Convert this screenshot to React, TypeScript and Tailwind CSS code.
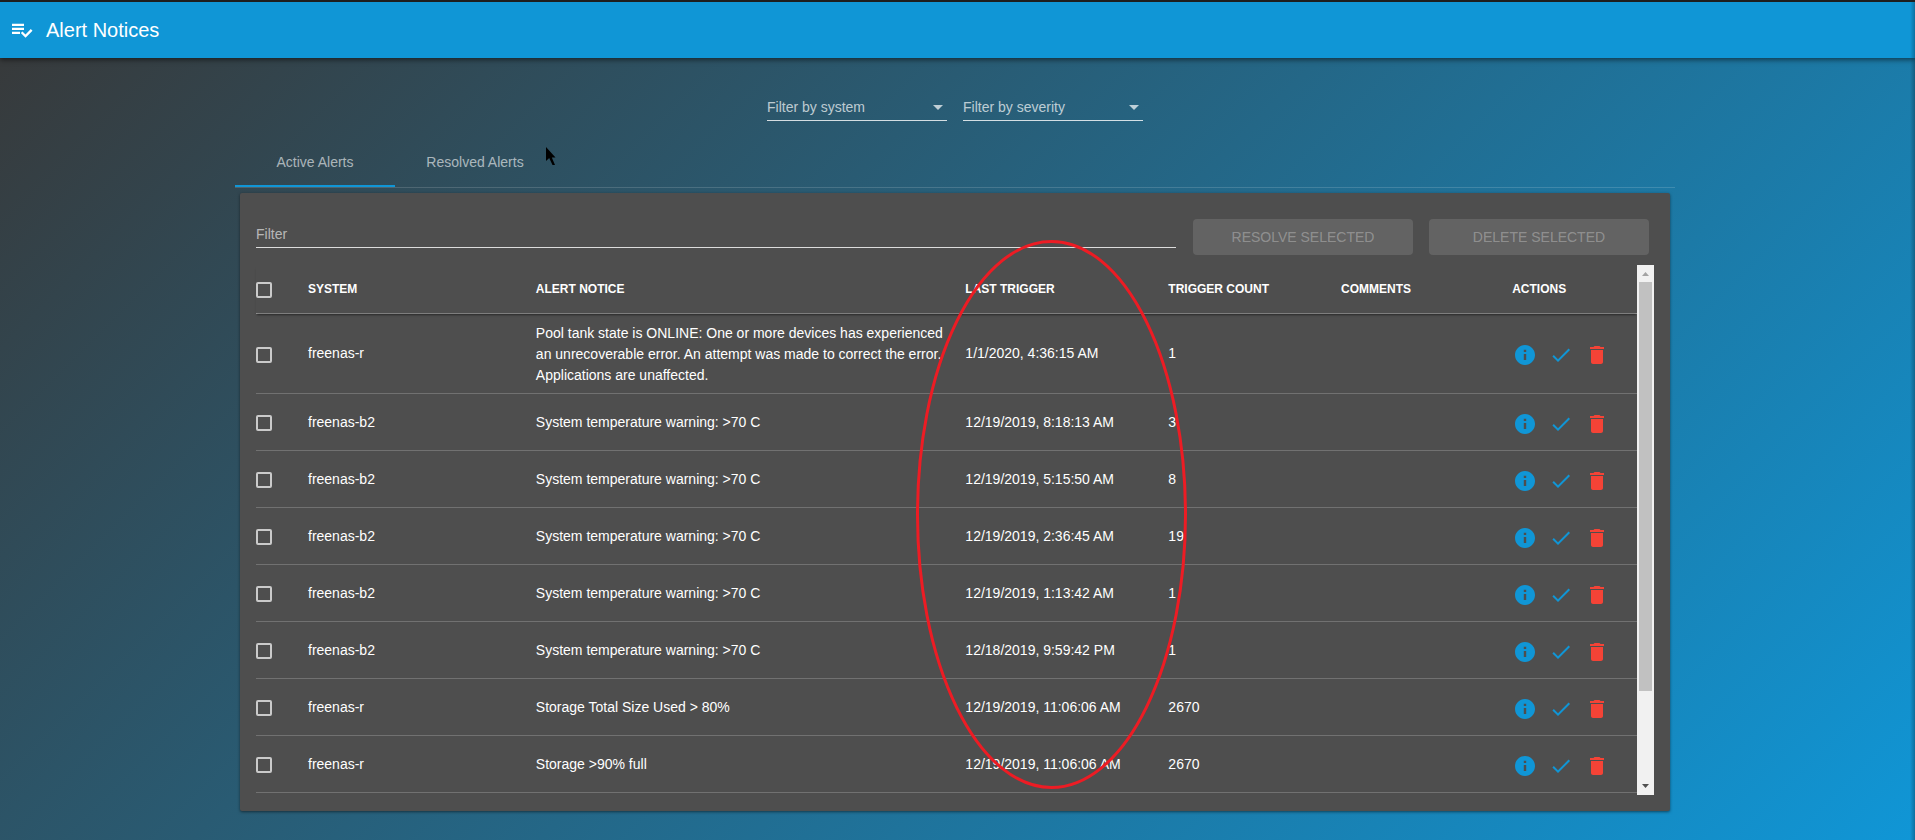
import React from "react";

type Alert = { system: string; notice: string; time: string; count: number };

const alerts: Alert[] = [
  {
    system: "freenas-r",
    notice:
      "Pool tank state is ONLINE: One or more devices has experienced an unrecoverable error. An attempt was made to correct the error. Applications are unaffected.",
    time: "1/1/2020, 4:36:15 AM",
    count: 1,
  },
  { system: "freenas-b2", notice: "System temperature warning: >70 C", time: "12/19/2019, 8:18:13 AM", count: 3 },
  { system: "freenas-b2", notice: "System temperature warning: >70 C", time: "12/19/2019, 5:15:50 AM", count: 8 },
  { system: "freenas-b2", notice: "System temperature warning: >70 C", time: "12/19/2019, 2:36:45 AM", count: 19 },
  { system: "freenas-b2", notice: "System temperature warning: >70 C", time: "12/19/2019, 1:13:42 AM", count: 1 },
  { system: "freenas-b2", notice: "System temperature warning: >70 C", time: "12/18/2019, 9:59:42 PM", count: 1 },
  { system: "freenas-r", notice: "Storage Total Size Used > 80%", time: "12/19/2019, 11:06:06 AM", count: 2670 },
  { system: "freenas-r", notice: "Storage >90% full", time: "12/19/2019, 11:06:06 AM", count: 2670 },
];

function Icon({ d, className }: { d: string; className: string }) {
  return (
    <svg viewBox="0 0 24 24" fill="currentColor" className={className} aria-hidden="true">
      <path d={d} />
    </svg>
  );
}

const INFO = "M12 2C6.48 2 2 6.48 2 12s4.48 10 10 10 10-4.48 10-10S17.52 2 12 2zm1.200 15h-2.400v-6h2.400v6zm0-8h-2.400V6.800h2.400z";
const CHECK = "M9 16.17L4.83 12l-1.42 1.41L9 19 21 7l-1.41-1.41z";
const TRASH = "M6 19c0 1.1.9 2 2 2h8c1.1 0 2-.9 2-2V7H6v12zM19 4h-3.5l-1-1h-5l-1 1H5v2h14V4z";
const PLAYLIST = "M14 9.700H2v2.300h12zM14 5.700H2V8h12zM2 16h8v-2.300H2zM20.800 11l1.700 1.700L15.500 19.800l-4.700-4.700 1.700-1.700 3 3z";

function FilterSelect({ label }: { label: string }) {
  return (
    <div className="relative w-[180px]">
      <select
        aria-label={label}
        className="block h-[30px] w-full appearance-none border-b border-white/80 bg-transparent pt-1 text-white/70 outline-none"
      >
        <option>{label}</option>
      </select>
      <svg viewBox="0 0 10 5" className="pointer-events-none absolute right-1 top-[14px] h-[5px] w-[10px] fill-white/70" aria-hidden="true">
        <path d="M0 0h10L5 5z" />
      </svg>
    </div>
  );
}

function Checkbox({ label }: { label: string }) {
  return (
    <input
      type="checkbox"
      aria-label={label}
      className="mt-[3px] block size-4 appearance-none rounded-xs border-2 border-white/70"
    />
  );
}

function ActionButton({ label, d, color }: { label: string; d: string; color: string }) {
  return (
    <button type="button" aria-label={label} className={color}>
      <Icon d={d} className="size-6" />
    </button>
  );
}

function AlertTable() {
  return (
    <table className="w-full table-fixed border-collapse text-left">
      <colgroup>
        <col className="w-[52px]" />
        <col className="w-[16.5%]" />
        <col className="w-[31.1%]" />
        <col className="w-[14.7%]" />
        <col className="w-[12.5%]" />
        <col className="w-[12.4%]" />
        <col />
      </colgroup>
      <thead className="shadow-[0_3px_2px_-1px_rgba(0,0,0,0.5)]">
        <tr className="h-12 border-b border-white/40 text-xs uppercase">
          <th>
            <Checkbox label="Select all alerts" />
          </th>
          <th>System</th>
          <th>Alert Notice</th>
          <th>Last Trigger</th>
          <th>Trigger Count</th>
          <th>Comments</th>
          <th>Actions</th>
        </tr>
      </thead>
      <tbody>
        {alerts.map((a, i) => (
          <tr key={i} className="h-[57px] border-b border-white/20">
            <td>
              <Checkbox label={"Select " + a.system} />
            </td>
            <td className="pt-px">{a.system}</td>
            <td className="pb-[7px] pr-3 pt-[9px]">{a.notice}</td>
            <td className="pt-px">{a.time}</td>
            <td className="pt-px">{a.count}</td>
            <td />
            <td>
              <div className="flex gap-3 pl-px pt-1">
                <ActionButton label="Details" d={INFO} color="text-[#1096d6]" />
                <ActionButton label="Resolve" d={CHECK} color="text-[#1096d6]" />
                <ActionButton label="Delete" d={TRASH} color="text-[#f44336]" />
              </div>
            </td>
          </tr>
        ))}
      </tbody>
    </table>
  );
}

function ScrollTrack() {
  return (
    <div className="flex w-[17px] flex-col bg-[#f1f1f1]" aria-hidden="true">
      <svg viewBox="0 0 17 17" className="size-[17px] fill-[#a3a3a3]">
        <path d="M5 11h7L8.500 7z" />
      </svg>
      <div className="flex flex-1 flex-col px-[2px]">
        <div className="h-[82.5%] bg-[#c1c1c1]" />
      </div>
      <svg viewBox="0 0 17 17" className="size-[17px] fill-[#505050]">
        <path d="M5 6h7L8.500 10z" />
      </svg>
    </div>
  );
}

export default function App() {
  return (
    <div className="relative flex min-h-screen flex-col overflow-hidden border-t-2 border-[#1e1e1e] bg-[linear-gradient(135deg,#383838,#1096d6)] font-['Liberation_Sans',Arial,sans-serif] text-sm leading-[21px] text-white">
      <header className="flex h-14 items-center gap-3 bg-[#1096d6] px-[10px] shadow-[0_2px_5px_rgba(0,0,0,0.5)]">
        <Icon d={PLAYLIST} className="size-6" />
        <h1 className="text-xl">Alert Notices</h1>
      </header>

      <main className="mx-auto w-full max-w-[1445px] pr-[5px] pt-[33px]">
        <div className="flex justify-center gap-4">
          <FilterSelect label="Filter by system" />
          <FilterSelect label="Filter by severity" />
        </div>

        <nav className="mt-[18px] flex h-[49px] border-b border-white/15" role="tablist">
          <button type="button" role="tab" aria-selected="true" className="h-12 w-40 border-b-2 border-[#1096d6] text-white/60">
            Active Alerts
          </button>
          <button type="button" role="tab" aria-selected="false" className="h-12 w-40 border-b-2 border-transparent text-white/60">
            Resolved Alerts
          </button>
        </nav>

        <section className="m-[5px] rounded-xs bg-[#4e4e4e] p-4 pt-[26px] shadow-[0_1px_3px_rgba(0,0,0,0.5)]">
          <div className="mb-[10px] flex h-9 pr-[5px]">
            <input
              type="text"
              aria-label="Filter"
              placeholder="Filter"
              className="mr-[17px] h-[29px] min-w-0 flex-1 border-b border-white/80 bg-transparent pt-px outline-none placeholder:text-white/60"
            />
            <button type="button" disabled className="mr-4 w-[220px] rounded bg-[#636363] uppercase text-white/30">
              Resolve Selected
            </button>
            <button type="button" disabled className="w-[220px] rounded bg-[#636363] uppercase text-white/30">
              Delete Selected
            </button>
          </div>
          <div className="flex">
            <div className="min-w-0 flex-1 pb-[2px]">
              <AlertTable />
            </div>
            <ScrollTrack />
          </div>
        </section>
      </main>

      <div className="pointer-events-none absolute inset-y-0 right-0 w-[5px] bg-linear-to-r from-transparent to-black/25" aria-hidden="true" />

      <svg viewBox="0 0 271 549" className="pointer-events-none absolute left-[916px] top-[238px] h-[549px] w-[271px]" aria-hidden="true">
        <ellipse cx="135.500" cy="274.500" rx="134" ry="273" fill="none" stroke="#ed1c24" strokeWidth="3" />
      </svg>
      <svg viewBox="0 0 11 18" className="pointer-events-none absolute left-[545px] top-[145px] h-[18px] w-[11px]" aria-hidden="true">
        <path d="M1 0v14l3.200-3 3.300 7h2.500l-3.200-7.500h3.700z" fill="#000" />
      </svg>
    </div>
  );
}
